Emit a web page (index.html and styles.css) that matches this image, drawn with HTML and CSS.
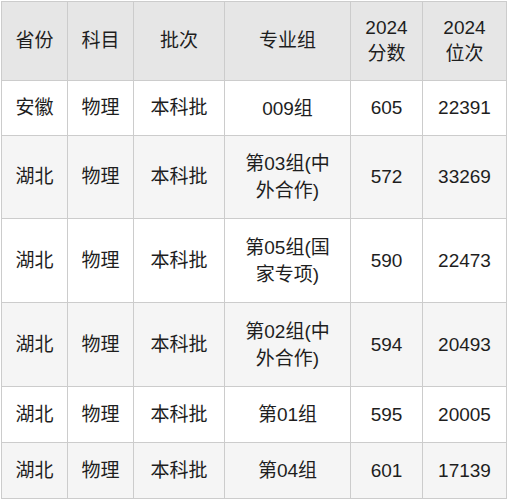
FILE: index.html
```html
<!DOCTYPE html>
<html lang="zh">
<head>
<meta charset="utf-8">
<link rel="stylesheet" href="styles.css">
</head>
<body>
<table class="score-table">
  <colgroup>
    <col class="c1"><col class="c2"><col class="c3"><col class="c4"><col class="c5"><col class="c6">
  </colgroup>
  <thead>
    <tr class="head">
      <th>省份</th><th>科目</th><th>批次</th><th>专业组</th><th>2024<br>分数</th><th>2024<br>位次</th>
    </tr>
  </thead>
  <tbody>
    <tr class="short"><td>安徽</td><td>物理</td><td>本科批</td><td>009组</td><td>605</td><td>22391</td></tr>
    <tr class="tall alt"><td>湖北</td><td>物理</td><td>本科批</td><td>第03组(中外合作)</td><td>572</td><td>33269</td></tr>
    <tr class="tall2"><td>湖北</td><td>物理</td><td>本科批</td><td>第05组(国家专项)</td><td>590</td><td>22473</td></tr>
    <tr class="tall2 alt"><td>湖北</td><td>物理</td><td>本科批</td><td>第02组(中外合作)</td><td>594</td><td>20493</td></tr>
    <tr class="short2"><td>湖北</td><td>物理</td><td>本科批</td><td>第01组</td><td>595</td><td>20005</td></tr>
    <tr class="short2 alt"><td>湖北</td><td>物理</td><td>本科批</td><td>第04组</td><td>601</td><td>17139</td></tr>
  </tbody>
</table>
</body>
</html>
```
FILE: styles.css
```css
html, body {
  margin: 0;
  padding: 0;
  background: #ffffff;
}
body {
  padding: 1px 0 0 1px;
}
.score-table {
  table-layout: fixed;
  border-collapse: collapse;
  width: 505px;
  font-family: "Liberation Sans", "Noto Sans CJK SC", sans-serif;
  font-size: 19px;
  color: #1e1e1e;
  border: 1px solid #cccccc;
}
.c1 { width: 66px; }
.c2 { width: 66px; }
.c3 { width: 91px; }
.c4 { width: 126px; }
.c5 { width: 72px; }
.c6 { width: 84px; }
.score-table th,
.score-table td {
  border: 1px solid #cccccc;
  text-align: center;
  vertical-align: middle;
  padding: 0 4px;
  line-height: 26px;
  font-weight: normal;
}
.score-table td:nth-child(4) {
  padding: 0 12px;
  line-height: 27px;
}
.head {
  height: 79px;
  background: #e6e6e6;
}
.short { height: 55px; }
.tall { height: 83px; }
.tall2 { height: 84px; }
.short2 { height: 56px; }
.alt { background: #f5f5f5; }
```
